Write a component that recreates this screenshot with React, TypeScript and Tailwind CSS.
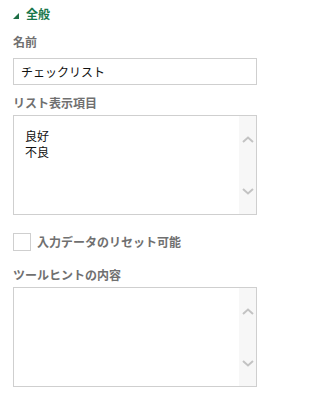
import React from "react";

const Chevron = ({ down }: { down?: boolean }) => (
  <svg width="12" height="7" viewBox="0 0 12 7" className="block">
    <polyline
      points={down ? "1,1 6,5.5 11,1" : "1,6 6,1.5 11,6"}
      fill="none"
      stroke="#c3c3c3"
      strokeWidth="2"
    />
  </svg>
);

const Area = ({ lines }: { lines?: string[] }) => (
  <div className="flex h-[100px] w-[244px] border border-[#cfcfcf] bg-white">
    <div className="flex-1 pl-[11px] pt-[12px] text-[12px] leading-[16px] text-[#111]">
      {lines?.map((l) => (
        <div key={l}>{l}</div>
      ))}
    </div>
    <div className="flex w-[17px] flex-col items-center justify-between bg-[#f7f7f7] pt-[20px] pb-[19px]">
      <Chevron />
      <Chevron down />
    </div>
  </div>
);

export default function App() {
  return (
    <div
      className="h-[409px] w-[268px] bg-white pl-[13px]"
      style={{ fontFamily: '"Noto Sans CJK JP", "Noto Sans", sans-serif' }}
    >
      <div className="flex h-[27px] items-center pt-[1px]">
        <svg width="6" height="6" viewBox="0 0 6 6" className="mt-[3px]">
          <polygon points="6,0 6,6 0,6" fill="#1d6e45" />
        </svg>
        <span className="ml-[7px] text-[12px] font-bold text-[#18774a]">全般</span>
      </div>
      <div className="mt-[3px] h-[24px] text-[12px] font-bold leading-[24px] text-[#707070]">名前</div>
      <div className="mt-[4px] flex h-[27px] w-[244px] items-center border border-[#cfcfcf] pl-[7px] text-[12px] text-[#111]">
        チェックリスト
      </div>
      <div className="mt-[6px] h-[24px] text-[12px] font-bold leading-[24px] text-[#707070]">リスト表示項目</div>
      <Area lines={["良好", "不良"]} />
      <div className="mt-[18px] flex h-[18px] items-center">
        <div className="h-[18px] w-[18px] border border-[#cfcfcf] bg-white" />
        <span className="ml-[6px] text-[12px] font-bold text-[#707070]">入力データのリセット可能</span>
      </div>
      <div className="mt-[12px] h-[24px] text-[12px] font-bold leading-[24px] text-[#707070]">ツールヒントの内容</div>
      <Area />
    </div>
  );
}
